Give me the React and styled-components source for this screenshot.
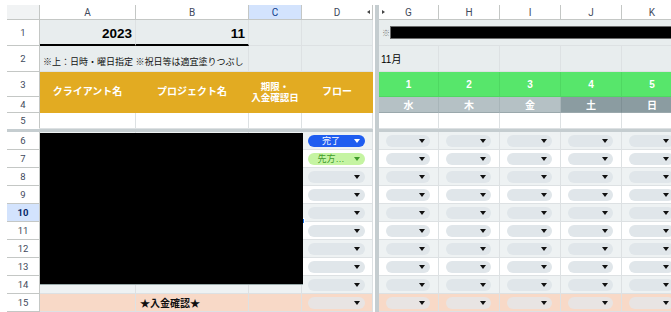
import React from 'react';
import styled, { createGlobalStyle } from 'styled-components';

const Global = createGlobalStyle`
  html, body { margin: 0; padding: 0; background: #fff; overflow: hidden; }
  body { font-family: "Liberation Sans", "Noto Sans CJK JP", sans-serif; }
  * { box-sizing: border-box; }
`;

const HEAD_LINE = '#c4c7c5';
const GRID_LINE = '#dde1e3';
const SHEET_GREY = '#e8edee';
const ALT_GREY = '#eef2f3';
const PEACH = '#f8d9c7';
const MUSTARD = '#e2ab22';
const GREEN = '#57e66b';
const DIVIDER = '#c5cdd0';

const Sheet = styled.div`
  display: grid;
  grid-template-columns: 33px 96px 113px 53px 71px 6px 60px 61px 61px 61px 61px;
  grid-template-rows: 15px 26px 26px 25px 16px 16px 3px repeat(10, 18px);
  padding: 5px 0 0 7px;
  width: max-content;
`;

const Corner = styled.div`
  grid-column: 1;
  grid-row: 1;
  background: #f1f3f4;
  border-right: 1px solid ${HEAD_LINE};
  border-bottom: 1px solid ${HEAD_LINE};
`;

const ColHead = styled.div`
  grid-row: 1;
  grid-column: ${(p) => p.$col};
  position: relative;
  display: flex;
  align-items: center;
  justify-content: center;
  background: ${(p) => (p.$active ? '#d3e3fd' : '#fff')};
  border-right: 1px solid ${HEAD_LINE};
  border-bottom: 1px solid ${HEAD_LINE};
  font: 10px Roboto, "Liberation Sans", sans-serif;
  color: ${(p) => (p.$active ? '#0b3b8c' : '#3f4a5c')};
`;

const HiddenMark = styled.span`
  position: absolute;
  top: 5px;
  ${(p) => (p.$side === 'left' ? 'right: 2px;' : 'left: 3px;')}
  width: 0;
  height: 0;
  border-top: 2.5px solid transparent;
  border-bottom: 2.5px solid transparent;
  ${(p) =>
    p.$side === 'left'
      ? 'border-right: 3px solid #444;'
      : 'border-left: 3px solid #444;'}
`;

const RowHead = styled.div`
  grid-column: 1;
  grid-row: ${(p) => p.$row};
  display: flex;
  align-items: center;
  justify-content: center;
  background: ${(p) => (p.$active ? '#d3e3fd' : '#fff')};
  border-right: 1px solid ${HEAD_LINE};
  border-bottom: 1px solid ${(p) => (p.$noLine ? 'transparent' : HEAD_LINE)};
  font: ${(p) => (p.$active ? 'bold' : 'normal')} 9.5px Roboto, "Liberation Sans", sans-serif;
  color: ${(p) => (p.$active ? '#0b2a6b' : '#3f4a5c')};
`;

const Cell = styled.div`
  grid-column: ${(p) => p.$col} / span ${(p) => p.$cs || 1};
  grid-row: ${(p) => p.$row} / span ${(p) => p.$rs || 1};
  position: relative;
  display: flex;
  align-items: center;
  min-width: 0;
  background: ${(p) => p.$bg || '#fff'};
  border-right: 1px solid ${(p) => p.$line || GRID_LINE};
  border-bottom: 1px solid ${(p) => p.$line || GRID_LINE};
`;

const YearCell = styled(Cell)`
  justify-content: flex-end;
  padding: 2px 3px 0 0;
  border-bottom: 2px solid #000;
  font-weight: bold;
  font-size: 13.5px;
  color: #000;
`;

const NoteCell = styled(Cell)`
  align-items: flex-end;
  padding: 0 0 3px 3px;
  font-size: 9px;
  color: #111;
  white-space: nowrap;
`;

const HeadBand = styled(Cell)`
  justify-content: center;
  text-align: center;
  background: ${MUSTARD};
  border-right-color: ${MUSTARD};
  border-bottom-color: ${MUSTARD};
  color: #fff;
  font-weight: bold;
  font-size: ${(p) => (p.$small ? '9.5px' : '10px')};
  line-height: 11.5px;
`;

const DayCell = styled(Cell)`
  justify-content: center;
  background: ${GREEN};
  border-right-color: #4fd862;
  border-bottom-color: #4fd862;
  color: #fff;
  font-weight: bold;
  font-size: 10px;
`;

const WeekCell = styled(Cell)`
  justify-content: center;
  background: ${(p) => (p.$weekend ? '#8b9ca1' : '#b5c1c5')};
  border-right-color: ${(p) => (p.$weekend ? '#7f9095' : '#a8b5b9')};
  border-bottom-color: #9aa8ac;
  color: #fff;
  font-weight: bold;
  font-size: 10px;
`;

const MonthCell = styled(Cell)`
  padding-left: 2px;
  font-size: 10px;
  color: #000;
`;

const BannerCell = styled(Cell)`
  padding-left: 3px;
  font-size: 8px;
  color: #777;
`;

const Redact = styled.div`
  flex: 1;
  height: 13px;
  background: #000;
  border: 1px solid #6b6b6b;
`;

const Block = styled.div`
  grid-column: 2 / span 3;
  grid-row: 8 / span 9;
  margin: 1px -1px 9px 0;
  background: #000;
  border-bottom: 1px solid #9aa;
  z-index: 2;
`;

const FillHandle = styled.span`
  position: absolute;
  right: -4px;
  bottom: -3px;
  width: 6px;
  height: 6px;
  background: #1a73e8;
  border: 1px solid #fff;
  z-index: 1;
`;

const ChipCell = styled(Cell)`
  padding: 0 ${(p) => (p.$wide ? '7px 0 6px' : '8px 0 7px')};
`;

const chipColors = {
  blue: { bg: '#1f5df0', fg: '#fff' },
  green: { bg: '#c5f4a2', fg: '#3f9a2b' },
  grey: { bg: '#e0e6ea', fg: '#111' },
  peach: { bg: '#e8e4e3', fg: '#111' },
};

const Chip = styled.div`
  flex: 1;
  height: 12px;
  border-radius: 6px;
  display: flex;
  align-items: center;
  padding-right: 5px;
  background: ${(p) => chipColors[p.$tone].bg};
  color: ${(p) => chipColors[p.$tone].fg};
`;

const ChipLabel = styled.span`
  flex: 1;
  text-align: center;
  font-size: 9px;
  line-height: 12px;
  white-space: nowrap;
`;

const Caret = styled.span`
  width: 0;
  height: 0;
  border-left: 3px solid transparent;
  border-right: 3px solid transparent;
  border-top: 4px solid currentColor;
  margin-top: 1px;
`;

const TotalCell = styled(Cell)`
  padding-left: 4px;
  font-size: 10px;
  font-weight: bold;
  color: #111;
  white-space: nowrap;
`;

const Divider = styled.div`
  grid-column: 6;
  grid-row: 1 / -1;
  background: #fff;
  border-right: 4px solid ${DIVIDER};
  z-index: 3;
`;

const HDivider = styled.div`
  grid-column: 1 / -1;
  grid-row: 7;
  background: ${DIVIDER};
`;

const letters = [
  ['A', 2],
  ['B', 3],
  ['C', 4],
  ['D', 5],
  ['G', 7],
  ['H', 8],
  ['I', 9],
  ['J', 10],
  ['K', 11],
];
const dayCols = [7, 8, 9, 10, 11];
const weekdays = ['水', '木', '金', '土', '日'];
const dataRows = [6, 7, 8, 9, 10, 11, 12, 13, 14, 15];

function Pill({ tone, label }) {
  return (
    <Chip $tone={tone}>
      <ChipLabel>{label}</ChipLabel>
      <Caret />
    </Chip>
  );
}

export default function App() {
  return (
    <>
      <Global />
      <Sheet>
        <Corner />
        {letters.map(([l, c]) => (
          <ColHead key={l} $col={c} $active={l === 'C'}>
            {l}
            {l === 'D' && <HiddenMark $side="left" />}
            {l === 'G' && <HiddenMark $side="right" />}
          </ColHead>
        ))}

        <RowHead $row={2}>1</RowHead>
        <RowHead $row={3}>2</RowHead>
        <RowHead $row={4}>3</RowHead>
        <RowHead $row={5}>4</RowHead>
        <RowHead $row={6} $noLine>5</RowHead>
        {dataRows.map((r) => (
          <RowHead key={r} $row={r + 2} $active={r === 10}>
            {r}
          </RowHead>
        ))}

        <YearCell $col={2} $row={2} $bg={SHEET_GREY}>2023</YearCell>
        <YearCell $col={3} $row={2} $bg={SHEET_GREY}>11</YearCell>
        <Cell $col={4} $row={2} $bg={SHEET_GREY} />
        <Cell $col={5} $row={2} $bg={SHEET_GREY} />
        <BannerCell $col={7} $cs={5} $row={2} $bg={SHEET_GREY}>
          ※<Redact />
        </BannerCell>

        <NoteCell $col={2} $cs={2} $row={3} $bg={SHEET_GREY}>
          ※上：日時・曜日指定 ※祝日等は適宜塗りつぶし
        </NoteCell>
        <Cell $col={4} $row={3} $bg={SHEET_GREY} />
        <Cell $col={5} $row={3} $bg={SHEET_GREY} />
        <MonthCell $col={7} $row={3} $bg={SHEET_GREY}>11月</MonthCell>
        {[8, 9, 10, 11].map((c) => (
          <Cell key={c} $col={c} $row={3} $bg={SHEET_GREY} />
        ))}

        <HeadBand $col={2} $row={4} $rs={2}>クライアント名</HeadBand>
        <HeadBand $col={3} $row={4} $rs={2}>プロジェクト名</HeadBand>
        <HeadBand $col={4} $row={4} $rs={2} $small>
          期限・
          <br />
          入金確認日
        </HeadBand>
        <HeadBand $col={5} $row={4} $rs={2}>フロー</HeadBand>
        {dayCols.map((c, i) => (
          <DayCell key={c} $col={c} $row={4}>
            {i + 1}
          </DayCell>
        ))}
        {dayCols.map((c, i) => (
          <WeekCell key={c} $col={c} $row={5} $weekend={i >= 3}>
            {weekdays[i]}
          </WeekCell>
        ))}

        {[2, 3, 4, 5, 7, 8, 9, 10, 11].map((c) => (
          <Cell key={c} $col={c} $row={6} />
        ))}

        <HDivider />

        {dataRows.map((r) => {
          const row = r + 2;
          const bg = r === 15 ? PEACH : r % 2 === 0 ? ALT_GREY : '#fff';
          const tone = r === 15 ? 'peach' : 'grey';
          const dTone = r === 6 ? 'blue' : r === 7 ? 'green' : tone;
          const dLabel = r === 6 ? '完了' : r === 7 ? '先方…' : '';
          return (
            <React.Fragment key={r}>
              <Cell $col={2} $row={row} $bg={bg} />
              {r === 15 ? (
                <TotalCell $col={3} $row={row} $bg={bg}>★入金確認★</TotalCell>
              ) : (
                <Cell $col={3} $row={row} $bg={bg} />
              )}
              <Cell $col={4} $row={row} $bg={bg}>
                {r === 10 && <FillHandle />}
              </Cell>
              <ChipCell $col={5} $row={row} $bg={bg} $wide>
                <Pill tone={dTone} label={dLabel} />
              </ChipCell>
              {dayCols.map((c) => (
                <ChipCell key={c} $col={c} $row={row} $bg={bg}>
                  <Pill tone={tone} label="" />
                </ChipCell>
              ))}
            </React.Fragment>
          );
        })}

        <Block />
        <Divider />
      </Sheet>
    </>
  );
}
